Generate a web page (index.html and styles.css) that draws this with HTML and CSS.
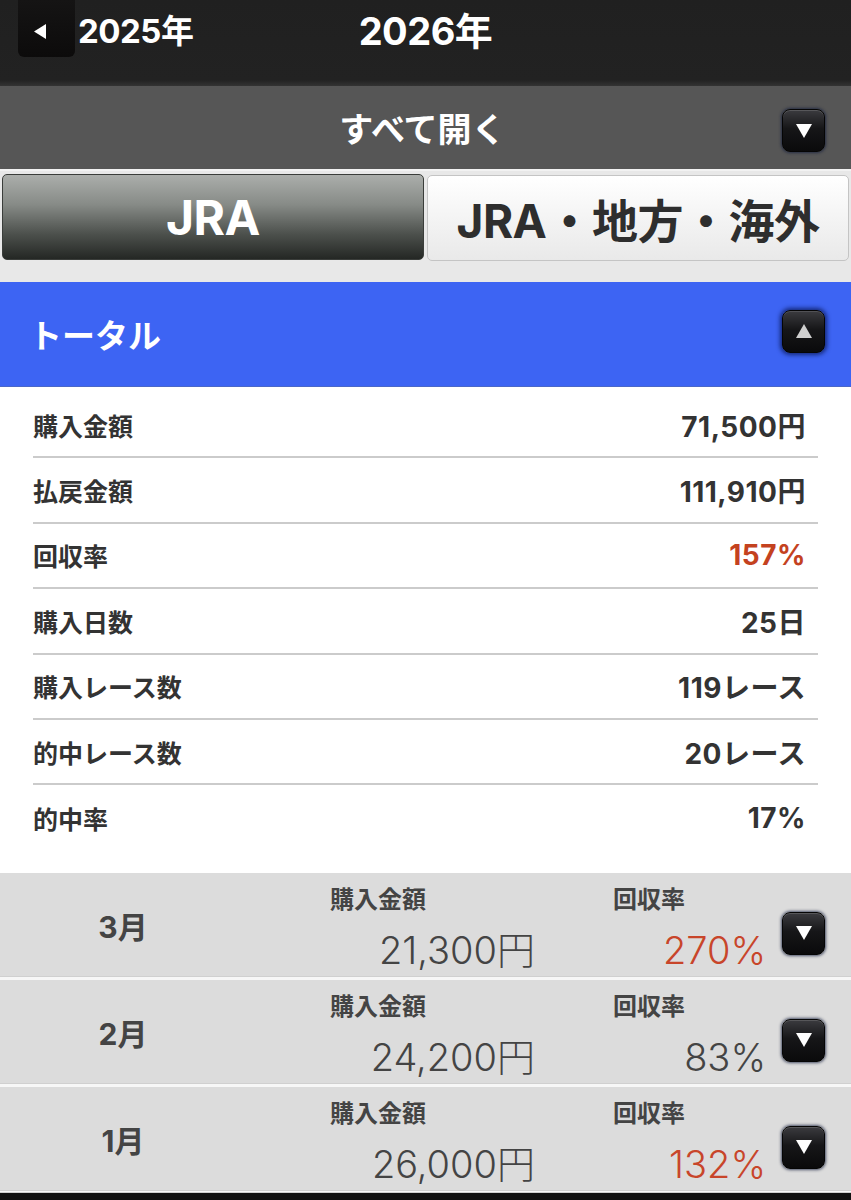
FILE: index.html
```html
<!DOCTYPE html>
<html lang="ja">
<head>
<meta charset="utf-8">
<title>収支</title>
<link rel="stylesheet" href="styles.css">
</head>
<body>
<div class="page">
  <header class="yearbar">
    <div class="yearbar-left">
      <span class="prev-btn"><svg width="12" height="15" viewBox="0 0 12 15"><path d="M12 0 L12 15 L0 7.5 Z" fill="#fff"/></svg></span>
      <span class="prev-year">2025年</span>
    </div>
    <h1 class="cur-year">2026年</h1>
    <div class="yearbar-right"></div>
  </header>

  <div class="openall">
    <span class="openall-label">すべて開く</span>
    <span class="toggle toggle-down"><svg width="16" height="14" viewBox="0 0 16 14"><path d="M0 0 H16 L8 14 Z" fill="#fff"/></svg></span>
  </div>

  <nav class="tabs">
    <div class="tab tab-active">JRA</div>
    <div class="tab">JRA・地方・海外</div>
  </nav>

  <section class="total">
    <div class="total-head">
      <span class="total-title">トータル</span>
      <span class="toggle toggle-up"><svg width="16" height="14" viewBox="0 0 16 14"><path d="M8 0 L16 14 H0 Z" fill="#cfcfcf"/></svg></span>
    </div>
    <div class="stats">
      <div class="stat"><span class="stat-label">購入金額</span><span class="stat-value">71,500円</span></div>
      <div class="stat"><span class="stat-label">払戻金額</span><span class="stat-value">111,910円</span></div>
      <div class="stat"><span class="stat-label">回収率</span><span class="stat-value red">157%</span></div>
      <div class="stat"><span class="stat-label">購入日数</span><span class="stat-value">25日</span></div>
      <div class="stat"><span class="stat-label">購入レース数</span><span class="stat-value">119レース</span></div>
      <div class="stat"><span class="stat-label">的中レース数</span><span class="stat-value">20レース</span></div>
      <div class="stat stat-last"><span class="stat-label">的中率</span><span class="stat-value">17%</span></div>
    </div>
  </section>

  <div class="months">
    <div class="month">
      <div class="month-name">3月</div>
      <div class="month-col month-amount"><span class="month-label">購入金額</span><span class="month-value">21,300円</span></div>
      <div class="month-col month-rate"><span class="month-label">回収率</span><span class="month-value red">270%</span></div>
      <span class="toggle toggle-down month-toggle"><svg width="16" height="14" viewBox="0 0 16 14"><path d="M0 0 H16 L8 14 Z" fill="#fff"/></svg></span>
    </div>
    <div class="month">
      <div class="month-name">2月</div>
      <div class="month-col month-amount"><span class="month-label">購入金額</span><span class="month-value">24,200円</span></div>
      <div class="month-col month-rate"><span class="month-label">回収率</span><span class="month-value">83%</span></div>
      <span class="toggle toggle-down month-toggle"><svg width="16" height="14" viewBox="0 0 16 14"><path d="M0 0 H16 L8 14 Z" fill="#fff"/></svg></span>
    </div>
    <div class="month">
      <div class="month-name">1月</div>
      <div class="month-col month-amount"><span class="month-label">購入金額</span><span class="month-value">26,000円</span></div>
      <div class="month-col month-rate"><span class="month-label">回収率</span><span class="month-value red">132%</span></div>
      <span class="toggle toggle-down month-toggle"><svg width="16" height="14" viewBox="0 0 16 14"><path d="M0 0 H16 L8 14 Z" fill="#fff"/></svg></span>
    </div>
  </div>
</div>
</body>
</html>
```

FILE: styles.css
```css
* { box-sizing: border-box; margin: 0; padding: 0; }

html, body {
  background: #111;
}

body {
  font-family: Inter, "Noto Sans CJK JP", sans-serif;
  color: #333;
  width: 851px;
  height: 1200px;
  overflow: hidden;
}

.page {
  display: flex;
  flex-direction: column;
}

/* ---------- year bar ---------- */
.yearbar {
  height: 86px;
  background: linear-gradient(to bottom, #202020 0, #222 80px, #333 86px);
  display: grid;
  grid-template-columns: 1fr auto 1fr;
  align-items: start;
}

.yearbar-left {
  display: flex;
  align-items: flex-start;
  padding-left: 18px;
}

.prev-btn {
  width: 57px;
  height: 57px;
  background: linear-gradient(to bottom, #151414, #0c0b0b);
  border-radius: 0 0 6px 6px;
  display: flex;
  align-items: center;
  justify-content: center;
  padding-right: 14px;
  padding-top: 6px;
}

.prev-year {
  color: #fff;
  font-weight: 700;
  font-size: 33px;
  line-height: 62px;
  margin-left: 3px;
  letter-spacing: -0.5px;
}

.cur-year {
  color: #fff;
  font-weight: 700;
  font-size: 38px;
  line-height: 62px;
  letter-spacing: -0.5px;
}

/* ---------- open all ---------- */
.openall {
  height: 85px;
  background: #565656;
  display: flex;
  align-items: center;
  justify-content: center;
  position: relative;
  border-bottom: 2px solid #f2f2f2;
}

.openall-label {
  color: #fff;
  font-weight: 700;
  font-size: 34px;
  font-family: "Noto Sans CJK JP", sans-serif;
  margin-left: -6px;
}

.openall .toggle {
  position: absolute;
  right: 26px;
  top: 23px;
}

/* ---------- toggle button ---------- */
.toggle {
  width: 43px;
  height: 43px;
  border-radius: 8px;
  background: linear-gradient(to bottom, #3b3b3f 0%, #161618 45%, #0a0a0b 100%);
  border: 1px solid #050505;
  box-shadow: 0 0 3px 1px rgba(20, 30, 60, 0.75), inset 0 1px 0 rgba(255,255,255,0.15);
  display: flex;
  align-items: center;
  justify-content: center;
  flex-shrink: 0;
}

.toggle-up {
  box-shadow: 0 0 4px 2px rgba(10, 25, 90, 0.8), inset 0 1px 0 rgba(255,255,255,0.12);
}

/* ---------- tabs ---------- */
.tabs {
  background: #e8e8e8;
  height: 111px;
  display: grid;
  grid-template-columns: 1fr 1fr;
  column-gap: 3px;
  padding: 2px 2px 0 2px;
  align-items: start;
}

.tab {
  height: 86px;
  border-radius: 5px;
  display: flex;
  align-items: center;
  justify-content: center;
  font-weight: 700;
  font-size: 46px;
  color: #2e2e2e;
  background: linear-gradient(to bottom, #ffffff 0%, #f4f4f4 50%, #e9e9e9 100%);
  border: 1px solid #c4c4c4;
  margin-top: 2px;
  letter-spacing: -0.5px;
}

.tab-active {
  color: #fff;
  font-size: 48px;
  border: 1px solid #3a3d3a;
  margin-top: 1px;
  background: linear-gradient(to bottom, #abaeab 0%, #878b87 35%, #4d514d 70%, #242724 100%);
}

/* ---------- total ---------- */
.total {
  background: #fff;
}

.total-head {
  height: 105px;
  background: #3d64f3;
  border-bottom: 1px solid #4a67c8;
  display: flex;
  align-items: center;
  justify-content: space-between;
  padding: 0 26px 0 29px;
}

.total-title {
  color: #fff;
  font-weight: 700;
  font-size: 33px;
  font-family: "Noto Sans CJK JP", sans-serif;
}

.total-head .toggle {
  margin-top: -6px;
}

.stats {
  padding: 6px 33px 22px 33px;
}

.stat {
  height: 65.4px;
  border-bottom: 2px solid #cbcbcb;
  display: flex;
  align-items: center;
  justify-content: space-between;
  padding-right: 12px;
}

.stat-last {
  border-bottom: none;
}

.stat-label {
  font-weight: 700;
  font-size: 25px;
  color: #333;
  font-family: "Noto Sans CJK JP", sans-serif;
}

.stat-value {
  font-weight: 700;
  font-size: 28px;
  color: #333;
  letter-spacing: 0.5px;
}

.red {
  color: #c4421f;
}

/* ---------- months ---------- */
.months {
  display: flex;
  flex-direction: column;
  background: #f7f7f7;
  gap: 3px;
  padding-bottom: 1px;
  border-bottom: 1px solid #cfcfcf;
}

.month {
  height: 104px;
  background: #dcdcdc;
  border-bottom: 1px solid #d0d0d0;
  display: flex;
  align-items: center;
}

.month-name {
  width: 246px;
  text-align: center;
  font-weight: 700;
  font-size: 30px;
  color: #444;
  padding-top: 2px;
}

.month-col {
  display: flex;
  flex-direction: column;
  align-self: stretch;
  padding-top: 8px;
}

.month-amount {
  margin-left: 84px;
  width: 205px;
}

.month-rate {
  margin-left: 78px;
  width: 153px;
}

.month-label {
  font-weight: 700;
  font-size: 24px;
  color: #444;
  line-height: 34px;
  font-family: "Noto Sans CJK JP", sans-serif;
}

.month-value {
  text-align: right;
  font-weight: 300;
  font-size: 38px;
  color: #444;
  line-height: 50px;
  margin-top: 10px;
}

.month-value.red {
  color: #c8452a;
}

.month-toggle {
  margin-left: 16px;
  margin-top: 18px;
}
```
